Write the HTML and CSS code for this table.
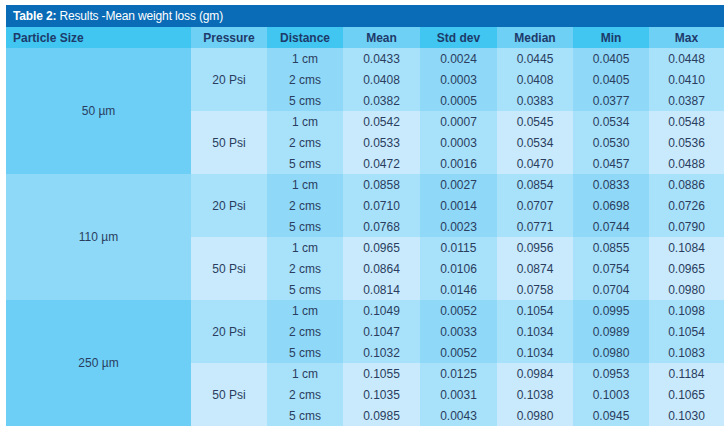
FILE: index.html
```html
<!DOCTYPE html>
<html>
<head>
<meta charset="utf-8">
<link rel="stylesheet" href="styles.css">
</head>
<body>
<table class="results">
  <colgroup>
    <col class="c-size"><col class="c-psi"><col class="c-dist"><col class="c-mean"><col class="c-std"><col class="c-med"><col class="c-min"><col class="c-max">
  </colgroup>
  <thead>
    <tr class="title-row"><th colspan="8"><b>Table 2:</b> Results -Mean weight loss (gm)</th></tr>
    <tr class="head-row">
      <th class="h-bright left">Particle Size</th>
      <th class="h-light">Pressure</th>
      <th class="h-bright">Distance</th>
      <th class="h-light">Mean</th>
      <th class="h-bright">Std dev</th>
      <th class="h-light">Median</th>
      <th class="h-bright">Min</th>
      <th class="h-light">Max</th>
    </tr>
  </thead>
  <tbody>
    <tr class="g20"><td rowspan="6" class="size s-a">50 µm</td><td rowspan="3" class="psi">20 Psi</td><td class="dk">1 cm</td><td>0.0433</td><td class="dk">0.0024</td><td>0.0445</td><td class="dk">0.0405</td><td>0.0448</td></tr>
    <tr class="g20"><td class="dk">2 cms</td><td>0.0408</td><td class="dk">0.0003</td><td>0.0408</td><td class="dk">0.0405</td><td>0.0410</td></tr>
    <tr class="g20"><td class="dk">5 cms</td><td>0.0382</td><td class="dk">0.0005</td><td>0.0383</td><td class="dk">0.0377</td><td>0.0387</td></tr>
    <tr class="g50"><td rowspan="3" class="psi">50 Psi</td><td class="dk">1 cm</td><td>0.0542</td><td class="dk">0.0007</td><td>0.0545</td><td class="dk">0.0534</td><td>0.0548</td></tr>
    <tr class="g50"><td class="dk">2 cms</td><td>0.0533</td><td class="dk">0.0003</td><td>0.0534</td><td class="dk">0.0530</td><td>0.0536</td></tr>
    <tr class="g50"><td class="dk">5 cms</td><td>0.0472</td><td class="dk">0.0016</td><td>0.0470</td><td class="dk">0.0457</td><td>0.0488</td></tr>

    <tr class="g20"><td rowspan="6" class="size s-b">110 µm</td><td rowspan="3" class="psi">20 Psi</td><td class="dk">1 cm</td><td>0.0858</td><td class="dk">0.0027</td><td>0.0854</td><td class="dk">0.0833</td><td>0.0886</td></tr>
    <tr class="g20"><td class="dk">2 cms</td><td>0.0710</td><td class="dk">0.0014</td><td>0.0707</td><td class="dk">0.0698</td><td>0.0726</td></tr>
    <tr class="g20"><td class="dk">5 cms</td><td>0.0768</td><td class="dk">0.0023</td><td>0.0771</td><td class="dk">0.0744</td><td>0.0790</td></tr>
    <tr class="g50"><td rowspan="3" class="psi">50 Psi</td><td class="dk">1 cm</td><td>0.0965</td><td class="dk">0.0115</td><td>0.0956</td><td class="dk">0.0855</td><td>0.1084</td></tr>
    <tr class="g50"><td class="dk">2 cms</td><td>0.0864</td><td class="dk">0.0106</td><td>0.0874</td><td class="dk">0.0754</td><td>0.0965</td></tr>
    <tr class="g50"><td class="dk">5 cms</td><td>0.0814</td><td class="dk">0.0146</td><td>0.0758</td><td class="dk">0.0704</td><td>0.0980</td></tr>

    <tr class="g20"><td rowspan="6" class="size s-a">250 µm</td><td rowspan="3" class="psi">20 Psi</td><td class="dk">1 cm</td><td>0.1049</td><td class="dk">0.0052</td><td>0.1054</td><td class="dk">0.0995</td><td>0.1098</td></tr>
    <tr class="g20"><td class="dk">2 cms</td><td>0.1047</td><td class="dk">0.0033</td><td>0.1034</td><td class="dk">0.0989</td><td>0.1054</td></tr>
    <tr class="g20"><td class="dk">5 cms</td><td>0.1032</td><td class="dk">0.0052</td><td>0.1034</td><td class="dk">0.0980</td><td>0.1083</td></tr>
    <tr class="g50"><td rowspan="3" class="psi">50 Psi</td><td class="dk">1 cm</td><td>0.1055</td><td class="dk">0.0125</td><td>0.0984</td><td class="dk">0.0953</td><td>0.1184</td></tr>
    <tr class="g50"><td class="dk">2 cms</td><td>0.1035</td><td class="dk">0.0031</td><td>0.1038</td><td class="dk">0.1003</td><td>0.1065</td></tr>
    <tr class="g50"><td class="dk">5 cms</td><td>0.0985</td><td class="dk">0.0043</td><td>0.0980</td><td class="dk">0.0945</td><td>0.1030</td></tr>
  </tbody>
</table>
</body>
</html>
```

FILE: styles.css
```css
html, body {
  margin: 0;
  padding: 0;
  background: #ffffff;
}
body {
  padding: 5px 0 0 6px;
  font-family: "Liberation Sans", Arial, sans-serif;
}
.results {
  border-collapse: collapse;
  border-spacing: 0;
  table-layout: fixed;
  width: 718px;
  font-size: 12px;
  color: #2a3d5e;
}
.c-size { width: 185px; }
.c-psi { width: 76px; }
.c-dist { width: 76px; }
.c-mean { width: 77px; }
.c-std { width: 77px; }
.c-med { width: 76px; }
.c-min { width: 76px; }
.c-max { width: 75px; }

.results th, .results td {
  padding: 0;
  border: 0;
  text-align: center;
  vertical-align: middle;
  white-space: nowrap;
}
.title-row th {
  height: 22px;
  background: #0a6cb6;
  color: #ffffff;
  font-weight: normal;
  text-align: left;
  padding-left: 7px;
  letter-spacing: -0.15px;
}
.title-row b { font-weight: bold; }
.head-row th {
  height: 21px;
  font-weight: bold;
  color: #1d3a6a;
}
.head-row th.left {
  text-align: left;
  padding-left: 7px;
}
.h-bright { background: #40c6f1; }
.h-light { background: #6fd0f5; }

.results td { height: 21px; }
.size.s-a { background: #6dcff6; }
.size.s-b { background: #8ed9f8; }

.g20 .psi, .g20 td { background: #a8e1fa; }
.g20 td.dk { background: #8fd8f7; }
.g50 .psi, .g50 td { background: #c8eafc; }
.g50 td.dk { background: #a8e1fa; }
.results td.size.s-a { background: #6dcff6; }
.results td.size.s-b { background: #8ed9f8; }
```
